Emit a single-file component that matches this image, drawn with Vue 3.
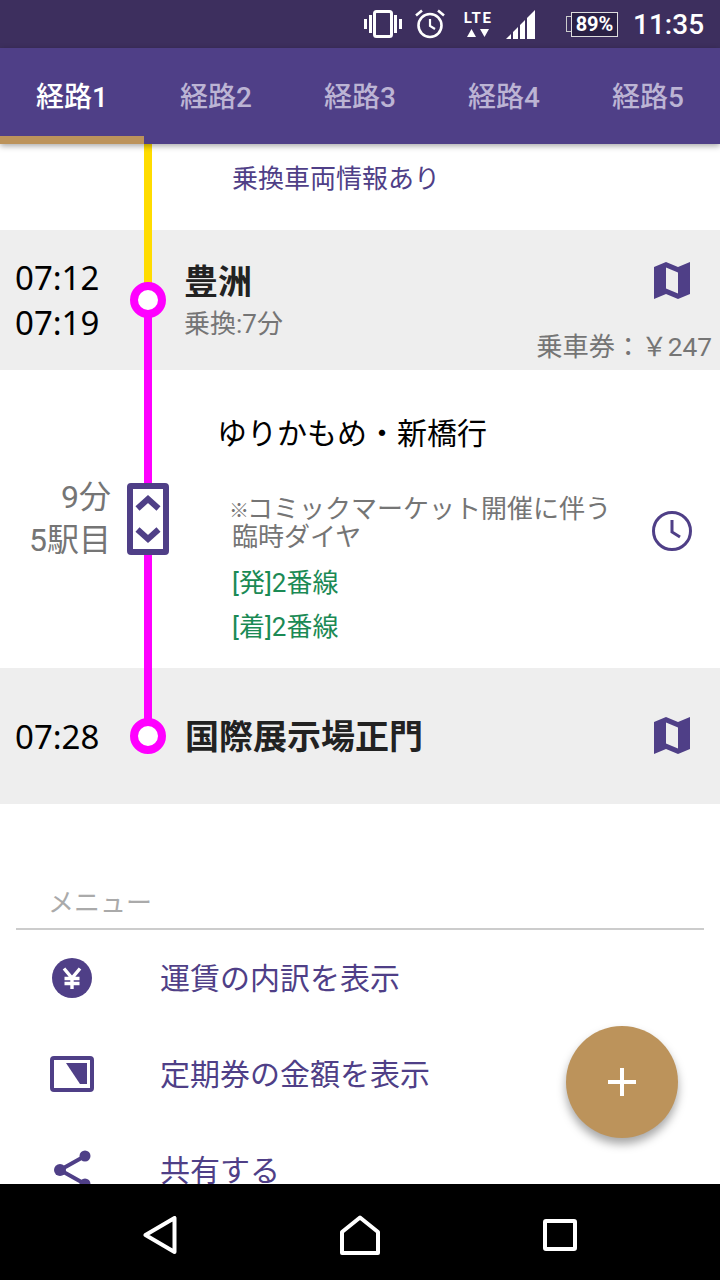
<template>
  <div class="phone">
    <div class="status-bar">
      <svg class="st-vibrate" width="38" height="28" viewBox="0 0 38 28">
        <rect x="10.5" y="1.5" width="17" height="25" rx="2" fill="none" stroke="#fff" stroke-width="3" />
        <path d="M0 9h3v10H0zM5 5h3v18H5zM30 5h3v18h-3zM35 9h3v10h-3z" fill="#fff" />
      </svg>
      <svg class="st-alarm" width="30" height="30" viewBox="0 0 30 30">
        <circle cx="15" cy="16.5" r="11.5" fill="none" stroke="#fff" stroke-width="2.6" />
        <path d="M15 10v7l5 3" fill="none" stroke="#fff" stroke-width="2.2" />
        <path d="M1 6.5 7 1.5M29 6.5 23 1.5" stroke="#fff" stroke-width="2.6" />
      </svg>
      <div class="st-lte">
        <span>LTE</span>
        <svg width="22" height="10" viewBox="0 0 22 10"><path d="M0 9 4.5 1 9 9zM13 1h9l-4.500 8z" fill="#fff" /></svg>
      </div>
      <svg class="st-signal" width="30" height="30" viewBox="0 0 30 30">
        <path d="M0 30 5 25v5zM7 30V23l5-5v12zM14 30V16l5-5v19zM21 30V9l8-8v29z" fill="#fff" />
      </svg>
      <div class="st-battery">
        <span class="nib"></span>
        <span class="level">89%</span>
      </div>
      <span class="st-time">11:35</span>
    </div>

    <div class="tabs">
      <div v-for="(tab, i) in tabs" :key="tab" class="tab" :class="{ active: i === 0 }">{{ tab }}</div>
    </div>

    <div class="content">
      <section class="notice">
        <span class="rail yellow"></span>
        <p>乗換車両情報あり</p>
      </section>

      <section class="station first">
        <span class="rail yellow half-top"></span>
        <span class="rail magenta half-bottom"></span>
        <div class="times">
          <div>07:12</div>
          <div>07:19</div>
        </div>
        <span class="node"></span>
        <div class="station-info">
          <div class="station-name">豊洲</div>
          <div class="transfer">乗換:7分</div>
        </div>
        <div class="station-side">
          <svg class="map-icon" width="36" height="37" viewBox="0 0 36 37">
            <path fill-rule="evenodd" d="M0 5 12 0 24 5 36 0V32L24 37 12 32 0 37ZM12 5.500V26.500L24 31.500V10.500Z" fill="#4f3f87" />
          </svg>
          <div class="fare">乗車券：￥247</div>
        </div>
      </section>

      <section class="ride">
        <span class="rail magenta"></span>
        <div class="ride-count">
          <div>9分</div>
          <div>5駅目</div>
        </div>
        <div class="toggle">
          <svg width="30" height="60" viewBox="0 0 30 60">
            <path d="M4.500 19.500 15 10l10.500 9.500M4.500 40.500 15 50l10.500-9.500" fill="none" stroke="#4f3f87" stroke-width="6" />
          </svg>
        </div>
        <div class="ride-main">
          <div class="ride-text">
            <div class="ride-title">ゆりかもめ・新橋行</div>
            <div class="ride-notes">
              <p class="note"><span class="mark">※</span>コミックマーケット開催に伴う<br />臨時ダイヤ</p>
              <p class="platform first-platform">[発]2番線</p>
              <p class="platform">[着]2番線</p>
            </div>
          </div>
          <svg class="clock" width="40" height="40" viewBox="0 0 40 40">
            <circle cx="20" cy="20" r="18.500" fill="none" stroke="#4f3f87" stroke-width="3" />
            <path d="M20 9v12l8 5" fill="none" stroke="#4f3f87" stroke-width="3" />
          </svg>
        </div>
      </section>

      <section class="station last">
        <span class="rail magenta half-top"></span>
        <div class="times"><div>07:28</div></div>
        <span class="node"></span>
        <div class="station-info">
          <div class="station-name">国際展示場正門</div>
        </div>
        <div class="station-side">
          <svg class="map-icon" width="36" height="37" viewBox="0 0 36 37">
            <path fill-rule="evenodd" d="M0 5 12 0 24 5 36 0V32L24 37 12 32 0 37ZM12 5.500V26.500L24 31.500V10.500Z" fill="#4f3f87" />
          </svg>
        </div>
      </section>

      <section class="menu">
        <div class="menu-head">メニュー</div>
        <div class="menu-item">
          <svg width="44" height="40" viewBox="0 0 44 40">
            <circle cx="22" cy="20" r="20" fill="#4f3f87" />
            <path d="M14 10.500 22 20l8-9.500M22 20v11M14.500 20.500h15M14.500 25.500h15" fill="none" stroke="#fff" stroke-width="3.400" />
          </svg>
          <span>運賃の内訳を表示</span>
        </div>
        <div class="menu-item">
          <svg width="44" height="36" viewBox="0 0 44 36">
            <rect x="2" y="2" width="40" height="32" rx="2" fill="none" stroke="#4f3f87" stroke-width="4" />
            <path d="M16 7H37V28H30Z" fill="#4f3f87" />
          </svg>
          <span>定期券の金額を表示</span>
        </div>
        <div class="menu-item">
          <svg width="44" height="40" viewBox="0 0 44 40">
            <path d="M35 6 10 20l25 14" fill="none" stroke="#4f3f87" stroke-width="4" />
            <circle cx="35" cy="6" r="5.500" fill="#4f3f87" />
            <circle cx="10" cy="20" r="6" fill="#4f3f87" />
            <circle cx="35" cy="34" r="5.500" fill="#4f3f87" />
          </svg>
          <span>共有する</span>
        </div>
      </section>

      <div class="fab">
        <svg width="30" height="30" viewBox="0 0 30 30"><path d="M15 1v28M1 15h28" stroke="#fff" stroke-width="4" /></svg>
      </div>
    </div>

    <div class="nav-bar">
      <div class="nav-cell">
        <svg width="34" height="38" viewBox="0 0 34 38">
          <path d="M2.500 19 31.500 2V36Z" fill="none" stroke="#fff" stroke-width="4" stroke-linejoin="round" />
        </svg>
      </div>
      <div class="nav-cell">
        <svg width="40" height="40" viewBox="0 0 40 40">
          <path d="M2 38V17L20 2.500 38 17V38Z" fill="none" stroke="#fff" stroke-width="4" stroke-linejoin="round" />
        </svg>
      </div>
      <div class="nav-cell">
        <svg width="34" height="32" viewBox="0 0 34 32">
          <rect x="2" y="2" width="30" height="28" rx="1" fill="none" stroke="#fff" stroke-width="4" />
        </svg>
      </div>
    </div>
  </div>
</template>

<script setup>
const tabs = ['経路1', '経路2', '経路3', '経路4', '経路5'];
</script>

<style scoped>
.phone {
  width: 720px;
  height: 1280px;
  display: flex;
  flex-direction: column;
  overflow: hidden;
  background: #fff;
  font-family: Roboto, "Noto Sans CJK JP", sans-serif;
}

p {
  margin: 0;
}

svg {
  display: block;
  flex: none;
}

.status-bar {
  height: 48px;
  flex: none;
  display: flex;
  align-items: center;
  background: #3d2f5e;
  color: #fff;
}

.st-vibrate {
  margin-left: 364px;
}

.st-alarm {
  margin-left: 13px;
}

.st-lte {
  width: 32px;
  margin-left: 17px;
  display: flex;
  flex-direction: column;
  align-items: center;
  gap: 2px;
  font-size: 15px;
  font-weight: 700;
  line-height: 15px;
  letter-spacing: 1.5px;
}

.st-signal {
  margin-left: 12px;
}

.st-battery {
  margin-left: 30px;
  display: flex;
  align-items: center;
}

.nib {
  width: 5px;
  height: 16px;
  border: 1px solid #ccc;
  border-right: 0;
  box-sizing: border-box;
}

.level {
  width: 47px;
  height: 25px;
  box-sizing: border-box;
  border: 1px solid #ddd;
  background: #2a2045;
  font-size: 20px;
  font-weight: 700;
  line-height: 23px;
  text-align: center;
}

.st-time {
  margin-left: 15px;
  font-size: 28px;
  font-weight: 500;
}

.tabs {
  height: 96px;
  flex: none;
  display: flex;
  background: #4f3f87;
  position: relative;
  z-index: 2;
  box-shadow: 0 2px 6px rgba(0, 0, 0, 0.35);
}

.tab {
  width: 144px;
  box-sizing: border-box;
  padding-bottom: 2px;
  display: flex;
  align-items: center;
  justify-content: center;
  color: #bcb4d4;
  font-size: 28px;
  font-weight: 500;
}

.tab.active {
  color: #fff;
  border-bottom: 8px solid #bc935b;
  padding-top: 6px;
  padding-bottom: 0;
}

.content {
  flex: 1;
  min-height: 0;
  position: relative;
  overflow: hidden;
}

section {
  position: relative;
}

.rail {
  position: absolute;
  left: 144px;
  width: 8px;
  top: 0;
  bottom: 0;
}

.yellow {
  background: #ffdc00;
}

.magenta {
  background: #ff00ff;
}

.notice {
  height: 86px;
  box-sizing: border-box;
  padding: 18px 0 0 232px;
  color: #4f3f87;
  font-size: 26px;
  line-height: 34px;
}

.station {
  display: flex;
  background: #eee;
}

.station.first {
  height: 140px;
}

.station.first .half-top {
  bottom: 70px;
}

.station.first .half-bottom {
  top: 70px;
}

.station.last {
  height: 136px;
  align-items: center;
}

.station.last .half-top {
  bottom: 68px;
}

.times {
  width: 115px;
  padding-left: 15px;
  color: #000;
  font-family: "Noto Sans", sans-serif;
  font-size: 33px;
  line-height: 45px;
}

.first .times {
  padding-top: 25px;
}

.last .times {
  padding-top: 1px;
}

.node {
  position: relative;
  width: 36px;
  height: 36px;
  flex: none;
  box-sizing: border-box;
  border: 8px solid #ff00ff;
  border-radius: 50%;
  background: #fff;
}

.first .node {
  margin-top: 52px;
}

.station-info {
  flex: 1;
  margin-left: 18px;
}

.first .station-info {
  padding-top: 29px;
}

.last .station-info {
  padding-top: 1px;
  margin-left: 19px;
}

.station-name {
  color: #222;
  font-size: 34px;
  font-weight: 700;
  line-height: 46px;
}

.transfer {
  margin-top: 2px;
  color: #757575;
  font-size: 26px;
  line-height: 34px;
}

.station-side {
  display: flex;
  flex-direction: column;
  align-items: flex-end;
  padding-right: 8px;
}

.first .station-side {
  padding-top: 32px;
}

.last .station-side {
  padding-bottom: 2px;
}

.map-icon {
  margin-right: 22px;
}

.fare {
  margin-top: 31px;
  color: #757575;
  font-size: 26.3px;
  line-height: 34px;
  white-space: nowrap;
}

.ride {
  height: 298px;
  display: flex;
  align-items: center;
}

.ride-count {
  width: 111px;
  color: #757575;
  font-size: 32px;
  line-height: 43px;
  text-align: right;
}

.toggle {
  position: relative;
  width: 42px;
  height: 72px;
  margin-left: 16px;
  flex: none;
  box-sizing: border-box;
  border: 6px solid #4f3f87;
  border-radius: 4px;
  background: #fff;
}

.ride-main {
  flex: 1;
  display: flex;
  align-items: center;
  margin: 20px 0 0 48px;
  padding-right: 28px;
}

.ride-text {
  flex: 1;
}

.clock {
  margin-top: 4px;
}

.ride-title {
  color: #000;
  font-size: 30px;
  line-height: 40px;
}

.ride-notes {
  margin-top: 41px;
  padding-left: 15px;
}

.note {
  color: #757575;
  font-size: 26px;
  line-height: 28px;
}

.mark {
  display: inline-block;
  width: 18px;
  margin-left: -3px;
  font-size: 20px;
  line-height: 1;
}

.platform {
  color: #1b8a55;
  font-size: 26px;
  line-height: 34px;
  margin-top: 10px;
}

.first-platform {
  margin-top: 15px;
}

.menu {
  padding: 0 16px;
}

.menu-head {
  height: 126px;
  box-sizing: border-box;
  padding: 82px 0 0 32px;
  border-bottom: 2px solid #ccc;
  color: #aaa;
  font-size: 26px;
  line-height: 34px;
}

.menu-item {
  height: 96px;
  display: flex;
  align-items: center;
  padding-left: 34px;
  color: #4f3f87;
  font-size: 30px;
}

.menu-item span {
  margin: 0 0 4px 66px;
}

.fab {
  position: absolute;
  left: 566px;
  top: 882px;
  width: 112px;
  height: 112px;
  display: flex;
  align-items: center;
  justify-content: center;
  border-radius: 50%;
  background: #bc935b;
  box-shadow: 0 6px 10px rgba(0, 0, 0, 0.35);
}

.nav-bar {
  height: 96px;
  flex: none;
  display: flex;
  justify-content: center;
  background: #000;
}

.nav-cell {
  width: 200px;
  display: flex;
  align-items: center;
  justify-content: center;
  padding-top: 6px;
  box-sizing: border-box;
}
</style>
